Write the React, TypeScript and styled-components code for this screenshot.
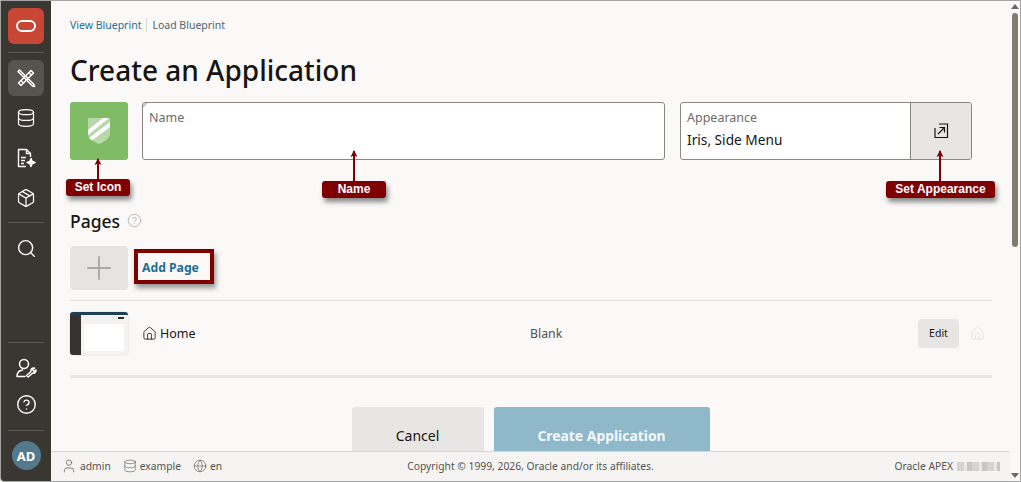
import React from 'react';
import styled, { createGlobalStyle } from 'styled-components';
import { CircleHelp, Database, Globe, House, Package, Plus, Search, User } from 'lucide-react';

const GlobalStyle = createGlobalStyle`
    html, body {
        margin: 0;
        padding: 0;
        background: #fff;
    }
    * {
        box-sizing: border-box;
    }
`;

const Frame = styled.div`
    position: relative;
    display: flex;
    width: 1021px;
    height: 482px;
    overflow: hidden;
    border: 1px solid #a3a3a3;
    border-radius: 0 0 0 4px;
    background: #faf9f8;
    color: #161513;
    font-family: "Noto Sans", "Open Sans", sans-serif;
`;

const Sidebar = styled.nav`
    flex: 0 0 50px;
    display: flex;
    flex-direction: column;
    align-items: center;
    padding-top: 7px;
    background: #3a3632;
    color: #fff;
`;

const Logo = styled.div`
    width: 36px;
    height: 36px;
    margin-bottom: 2px;
    border-radius: 6px;
    background: #c74634;
    display: flex;
    align-items: center;
    justify-content: center;
    flex: none;
`;

const Oval = styled.span`
    display: block;
    width: 20px;
    height: 12px;
    border: 2px solid #fff;
    border-radius: 6px;
`;

const RailDivider = styled.div`
    width: 36px;
    height: 1px;
    flex: none;
    margin: 6px 0 7px;
    background: #5c5853;
`;

const RailGroup = styled.div<{ $gap?: number; $after?: number }>`
    display: flex;
    flex-direction: column;
    flex: none;
    gap: ${(p) => p.$gap ?? 0}px;
    margin-bottom: ${(p) => p.$after ?? 0}px;
`;

const RailButton = styled.div<{ $active?: boolean }>`
    width: 36px;
    height: 36px;
    flex: none;
    border-radius: 6px;
    display: flex;
    align-items: center;
    justify-content: center;
    background: ${(p) => (p.$active ? '#57534e' : 'transparent')};
`;

const RailSpacer = styled.div`
    flex: 1;
`;

const Avatar = styled.div`
    width: 29px;
    height: 29px;
    flex: none;
    margin: 3px 0 11px;
    border-radius: 50%;
    background: #537a8c;
    color: #fff;
    font-size: 13px;
    font-weight: 700;
    display: flex;
    align-items: center;
    justify-content: center;
`;

const Main = styled.div`
    flex: 1;
    min-width: 0;
    display: flex;
    flex-direction: column;
`;

const Content = styled.main`
    flex: 1;
    min-height: 0;
    overflow: hidden;
    padding: 16px 18px 0 19px;
`;

const LinkRow = styled.div`
    display: flex;
    align-items: center;
    height: 15px;
    font-size: 10.5px;
`;

const TopLink = styled.a<{ $divider?: boolean }>`
    color: ${(p) => (p.$divider ? '#4f6470' : '#1d6f94')};
    padding-left: ${(p) => (p.$divider ? '5px' : '0')};
    margin-left: ${(p) => (p.$divider ? '5px' : '0')};
    border-left: ${(p) => (p.$divider ? '1px solid #d8d6d3' : 'none')};
    line-height: 14px;
`;

const Title = styled.h1`
    margin: 18px 0 12px;
    height: 40px;
    font-size: 28px;
    line-height: 40px;
    font-weight: 500;
    color: #161513;
`;

const FormRow = styled.div`
    display: flex;
    height: 58px;
    padding-right: 20px;
`;

const IconTile = styled.div`
    flex: 0 0 58px;
    margin-right: 14px;
    background: #80bc66;
    border-radius: 3px;
    display: flex;
    align-items: center;
    justify-content: center;
`;

const NameField = styled.div`
    position: relative;
    flex: 0 0 523px;
    margin-right: 15px;
    overflow: hidden;
    padding: 6px 6px;
    background: #fff;
    border: 1px solid #8a8783;
    border-radius: 3px;
    font-size: 12.5px;
    color: #6e6c69;

    &::before {
        content: '';
        position: absolute;
        left: 0;
        top: 0;
        border-top: 5px solid #c9c7c4;
        border-right: 5px solid transparent;
    }
`;

const AppearanceField = styled.div`
    flex: 1;
    display: flex;
    overflow: hidden;
    background: #fff;
    border: 1px solid #8a8783;
    border-radius: 3px;
`;

const AppearanceValue = styled.div`
    flex: 1;
    padding: 6px 6px;
    font-size: 12.5px;
    color: #6e6c69;
`;

const ValueText = styled.div`
    margin-top: 4px;
    font-size: 13.7px;
    color: #161513;
`;

const AppearanceButton = styled.div`
    flex: 0 0 61px;
    border-left: 1px solid #8a8783;
    background: #e8e6e4;
    display: flex;
    align-items: center;
    justify-content: center;
`;

const SectionHeading = styled.div`
    display: flex;
    align-items: center;
    gap: 7px;
    margin: 48px 0 13px;
    height: 25px;
    font-size: 17.5px;
    font-weight: 500;
`;

const AddRow = styled.div`
    display: flex;
    align-items: center;
    gap: 14px;
    height: 44px;
`;

const AddTile = styled.div`
    flex: 0 0 58px;
    height: 44px;
    border-radius: 4px;
    background: #e6e3e1;
    color: #aca8a4;
    display: flex;
    align-items: center;
    justify-content: center;
`;

const AddLink = styled.span`
    padding-bottom: 2px;
    font-size: 12.2px;
    font-weight: 700;
    color: #1d6f94;
`;

const PageRow = styled.div`
    display: flex;
    align-items: center;
    height: 78px;
    margin-top: 10px;
    border-top: 1px solid #e0dedc;
    border-bottom: 3px solid #e8e6e4;
    padding-bottom: 12px;
    padding-top: 2px;
`;

const Thumb = styled.div`
    flex: 0 0 58px;
    height: 43px;
    display: flex;
    overflow: hidden;
    border-radius: 3px;
    border-top: 3px solid #1f3f55;
    background: #f4f3f1;
    box-shadow: 0 0 2px rgba(0, 0, 0, 0.15);
`;

const ThumbRail = styled.div`
    flex: 0 0 11px;
    background: #35322f;
`;

const ThumbPaper = styled.div`
    flex: 1;
    padding: 2px 4px 4px 3px;
    display: flex;
    flex-direction: column;
`;

const ThumbBar = styled.div`
    flex: 0 0 2px;
    width: 6px;
    margin: 0 0 5px auto;
    background: #2b2926;
`;

const ThumbSheet = styled.div`
    flex: 1;
    background: #fff;
`;

const PageName = styled.div`
    flex: 0 0 388px;
    display: flex;
    align-items: center;
    gap: 3px;
    margin-left: 14px;
    font-size: 12.5px;
`;

const PageType = styled.div`
    flex: 1;
    font-size: 12.3px;
    color: #55524f;
`;

const EditButton = styled.div`
    flex: 0 0 41px;
    height: 29px;
    margin-right: 11px;
    border-radius: 4px;
    background: #e8e6e4;
    font-size: 10.5px;
    display: flex;
    align-items: center;
    justify-content: center;
`;

const FadedHome = styled.div`
    flex: 0 0 22px;
    color: #e2e0de;
    display: flex;
`;

const Actions = styled.div`
    display: flex;
    justify-content: center;
    gap: 10px;
    margin-top: 29px;
    margin-left: -1px;
`;

const ActionButton = styled.div<{ $primary?: boolean }>`
    flex: 0 0 ${(p) => (p.$primary ? '216px' : '132px')};
    height: 58px;
    border-radius: 3px;
    padding-top: 19px;
    text-align: center;
    font-size: ${(p) => (p.$primary ? '13.9px' : '14px')};
    font-weight: ${(p) => (p.$primary ? 700 : 400)};
    background: ${(p) => (p.$primary ? '#8fb9ca' : '#e8e6e4')};
    color: ${(p) => (p.$primary ? '#f4f8fa' : '#161513')};
`;

const Footer = styled.footer`
    flex: 0 0 30px;
    display: grid;
    grid-template-columns: 1fr auto 1fr;
    align-items: center;
    padding: 0 10px 1px 10px;
    border-top: 1px solid #d8d6d3;
    background: #f5f4f2;
    font-size: 10.3px;
    color: #55524f;
`;

const FooterGroup = styled.div`
    display: flex;
    align-items: center;
    gap: 12px;
`;

const FooterItem = styled.span`
    display: flex;
    align-items: center;
    gap: 3px;
`;

const Version = styled.div`
    display: flex;
    align-items: center;
    justify-content: flex-end;
    gap: 4px;
`;

const Redacted = styled.span`
    display: block;
    width: 43px;
    height: 9px;
    background: repeating-linear-gradient(90deg, #d6d4d2 0 7px, #ebe9e7 7px 10px, #c9c7c5 10px 15px);
`;

const ScrollTrack = styled.div`
    position: relative;
    flex: 0 0 10px;
    background: #faf9f8;
`;

const ScrollThumb = styled.div`
    position: absolute;
    left: 2px;
    top: 12px;
    width: 6px;
    height: 234px;
    border-radius: 3px;
    background: #827b74;
`;

const ScrollArrow = styled.div<{ $down?: boolean }>`
    position: absolute;
    left: 1px;
    ${(p) => (p.$down ? 'bottom: 3px;' : 'top: 3px;')}
    border-left: 4px solid transparent;
    border-right: 4px solid transparent;
    ${(p) => (p.$down ? 'border-top: 5px solid #6b6762;' : 'border-bottom: 5px solid #6b6762;')}
`;

const Callout = styled.div<{ $left: number; $top: number; $width: number }>`
    position: absolute;
    left: ${(p) => p.$left - 1}px;
    top: ${(p) => p.$top - 1}px;
    width: ${(p) => p.$width}px;
    height: 17px;
    border-radius: 3px;
    background: #7f0000;
    color: #fff;
    font-family: "Liberation Sans", Arial, sans-serif;
    font-size: 12px;
    font-weight: 700;
    line-height: 17px;
    text-align: center;
    box-shadow: 2px 4px 5px rgba(0, 0, 0, 0.45);
`;

const Pointer = styled.svg<{ $left: number; $top: number }>`
    position: absolute;
    left: ${(p) => p.$left - 1}px;
    top: ${(p) => p.$top - 1}px;
    overflow: visible;
`;

const HighlightBox = styled.div`
    position: absolute;
    left: 133px;
    top: 248px;
    width: 80px;
    height: 35px;
    border: 4px solid #7f0000;
    box-shadow: 2px 4px 5px rgba(0, 0, 0, 0.4);
`;

const ArrowUp = ({ left, top, height }: { left: number; top: number; height: number }) => (
    <Pointer $left={left} $top={top} width="8" height={height} viewBox={`0 0 8 ${height}`}>
        <path d={`M4 1V${height}`} stroke="#7f0000" strokeWidth="2" fill="none" />
        <path d="M4 0L7.5 7L4 5.5L0.5 7Z" fill="#7f0000" />
    </Pointer>
);

const railIcon = { size: 20, strokeWidth: 1.5, color: '#fff' };

const ToolsIcon = () => (
    <svg width="22" height="22" viewBox="0 0 22 22" fill="none" stroke="#fff" strokeWidth="1.5" strokeLinejoin="round">
        <path d="M3 4.5L4.5 3L19 17.5L19.5 19.5L17.5 19Z" />
        <path d="M18.5 6L6 18.5L3.5 16L16 3.5Z" />
        <path d="M14 5.5L16.5 8M6 13.5l2.5 2.5" />
    </svg>
);

const PageIcon = () => (
    <svg width="22" height="22" viewBox="0 0 22 22" fill="none" stroke="#fff" strokeWidth="1.4" strokeLinejoin="round">
        <path d="M11 19.5H3.5V2.5H11.5L15.5 6.5V10" />
        <path d="M11.5 2.5V6.5H15.5" />
        <path d="M6 10.5H11M6 13.5H10M6 16.5H9" />
        <path d="M16 11.5L17.2 14.3L20 15.5L17.2 16.7L16 19.5L14.8 16.7L12 15.5L14.8 14.3Z" fill="#fff" />
    </svg>
);

const UserToolIcon = () => (
    <svg width="22" height="22" viewBox="0 0 22 22" fill="none" stroke="#fff" strokeWidth="1.5" strokeLinecap="round" strokeLinejoin="round">
        <circle cx="9" cy="7" r="4.5" />
        <path d="M2 19.5C2 15.5 4.5 13.5 7.5 13M2 19.5H10" />
        <path d="M11.5 18.5L16 14.5C15.4 12.5 17 10.5 19.5 11L17.8 13L19 14.5L21 13C21.2 15.3 19.3 16.8 17.4 16.2L13.2 20Z" />
    </svg>
);

const ShieldIcon = () => (
    <svg width="24" height="28" viewBox="0 0 24 28">
        <path d="M1 1H23V17C23 21 17 25 12 27C7 25 1 21 1 17Z" fill="#b8d8aa" />
        <path d="M1 13L16 1H22L1 18Z" fill="#fff" />
        <path d="M2 21L23 5V10L5 23.5Z" fill="#fff" />
    </svg>
);

const OpenInIcon = () => (
    <svg width="16" height="16" viewBox="0 0 16 16" fill="none" strokeWidth="1.2">
        <path d="M6 1H14.5V14.5H2V5" stroke="#161513" />
        <path d="M5 11L11.5 4.5M6.5 4.5H11.5V9.5" stroke="#161513" />
    </svg>
);

export const App = () => {
    return (
        <Frame>
            <GlobalStyle />
            <Sidebar>
                <Logo><Oval /></Logo>
                <RailDivider />
                <RailGroup $gap={4}>
                    <RailButton $active><ToolsIcon /></RailButton>
                    <RailButton><Database {...railIcon} /></RailButton>
                    <RailButton><PageIcon /></RailButton>
                    <RailButton><Package {...railIcon} /></RailButton>
                </RailGroup>
                <RailDivider />
                <RailButton><Search size={21} strokeWidth={1.6} color="#fff" /></RailButton>
                <RailSpacer />
                <RailDivider />
                <RailGroup $after={2}>
                    <RailButton><UserToolIcon /></RailButton>
                    <RailButton><CircleHelp size={21} strokeWidth={1.6} color="#fff" /></RailButton>
                </RailGroup>
                <RailDivider />
                <Avatar>AD</Avatar>
            </Sidebar>
            <Main>
                <Content>
                    <LinkRow>
                        <TopLink>View Blueprint</TopLink>
                        <TopLink $divider>Load Blueprint</TopLink>
                    </LinkRow>
                    <Title>Create an Application</Title>
                    <FormRow>
                        <IconTile><ShieldIcon /></IconTile>
                        <NameField>Name</NameField>
                        <AppearanceField>
                            <AppearanceValue>
                                Appearance
                                <ValueText>Iris, Side Menu</ValueText>
                            </AppearanceValue>
                            <AppearanceButton><OpenInIcon /></AppearanceButton>
                        </AppearanceField>
                    </FormRow>
                    <SectionHeading>
                        Pages
                        <CircleHelp size={15} strokeWidth={1.2} color="#a8a5a2" />
                    </SectionHeading>
                    <AddRow>
                        <AddTile><Plus size={38} strokeWidth={1.2} /></AddTile>
                        <AddLink>Add Page</AddLink>
                    </AddRow>
                    <PageRow>
                        <Thumb>
                            <ThumbRail />
                            <ThumbPaper>
                                <ThumbBar />
                                <ThumbSheet />
                            </ThumbPaper>
                        </Thumb>
                        <PageName><House size={15} strokeWidth={1.3} />Home</PageName>
                        <PageType>Blank</PageType>
                        <EditButton>Edit</EditButton>
                        <FadedHome><House size={15} strokeWidth={1.3} /></FadedHome>
                    </PageRow>
                    <Actions>
                        <ActionButton>Cancel</ActionButton>
                        <ActionButton $primary>Create Application</ActionButton>
                    </Actions>
                </Content>
                <Footer>
                    <FooterGroup>
                        <FooterItem><User size={16} strokeWidth={1} />admin</FooterItem>
                        <FooterItem><Database size={14} strokeWidth={1} />example</FooterItem>
                        <FooterItem><Globe size={14} strokeWidth={1} />en</FooterItem>
                    </FooterGroup>
                    <div>Copyright © 1999, 2026, Oracle and/or its affiliates.</div>
                    <Version>Oracle APEX <Redacted /></Version>
                </Footer>
            </Main>
            <ScrollTrack>
                <ScrollArrow />
                <ScrollThumb />
                <ScrollArrow $down />
            </ScrollTrack>

            <ArrowUp left={94} top={158} height={22} />
            <Callout $left={66} $top={179} $width={64}>Set Icon</Callout>
            <ArrowUp left={350} top={150} height={32} />
            <Callout $left={322} $top={181} $width={64}>Name</Callout>
            <ArrowUp left={936} top={150} height={32} />
            <Callout $left={886} $top={181} $width={109}>Set Appearance</Callout>
            <HighlightBox />
        </Frame>
    );
};

export default App;
